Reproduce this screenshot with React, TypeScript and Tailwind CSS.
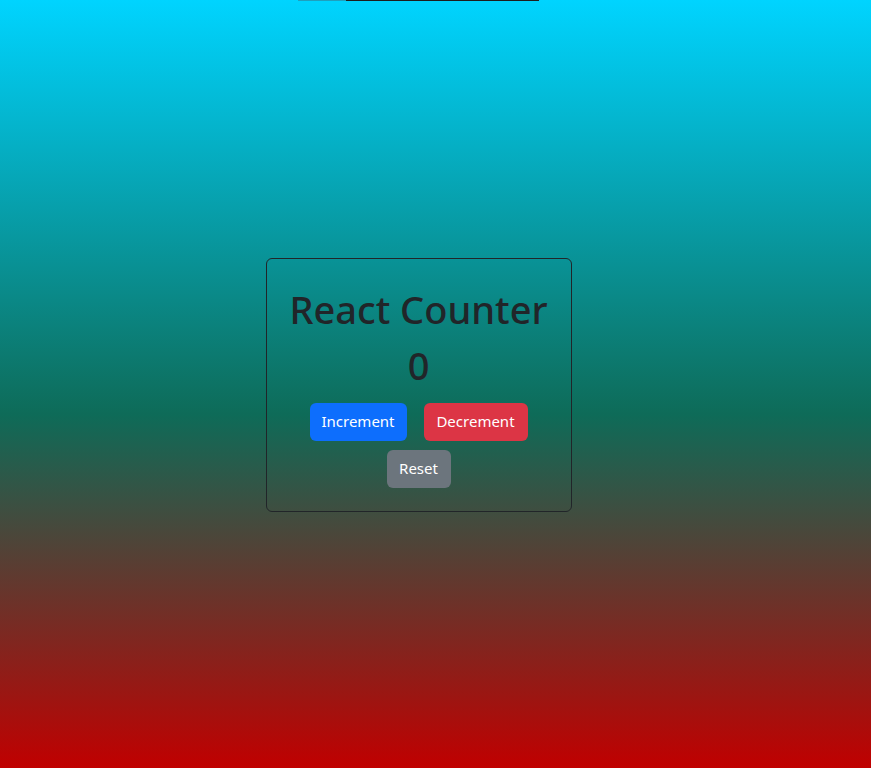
import { useState } from "react";

export default function App() {
  const [count, setCount] = useState(0);

  return (
    <div
      className="flex min-h-screen flex-col bg-[linear-gradient(180deg,#00d4ff_0%,#0e6b58_54%,#c00000_100%)] text-[#212529]"
      style={{ fontFamily: '"Noto Sans", "Open Sans", sans-serif' }}
    >
      {/* top strip */}
      <div className="flex h-px justify-center pr-[34px]">
        <div className="w-[48px] bg-[#1f9fbd]" />
        <div className="w-[193px] bg-[#1e1e1e]" />
      </div>

      <div className="flex flex-1 items-center justify-center pr-[34px]">
        <div className="flex w-[306px] flex-col items-center rounded-md border border-[#212529] px-4 pt-[26px] pb-[23px]">
          <h1 className="whitespace-nowrap text-[38px] leading-[48px] font-medium">React Counter</h1>
          <h1 className="mt-2 text-[38px] leading-[48px] font-medium">{count}</h1>
          <div className="mt-[14px] flex gap-[17px]">
            <button
              onClick={() => setCount(count + 1)}
              className="h-[38px] w-[97px] rounded-md bg-[#0d6efd] text-[15px] text-white"
            >
              Increment
            </button>
            <button
              onClick={() => setCount(count - 1)}
              className="h-[38px] w-[104px] rounded-md bg-[#dc3545] text-[15px] text-white"
            >
              Decrement
            </button>
          </div>
          <button
            onClick={() => setCount(0)}
            className="mt-[9px] h-[38px] w-[64px] rounded-md bg-[#6c757d] text-[15px] text-white"
          >
            Reset
          </button>
        </div>
      </div>
    </div>
  );
}
